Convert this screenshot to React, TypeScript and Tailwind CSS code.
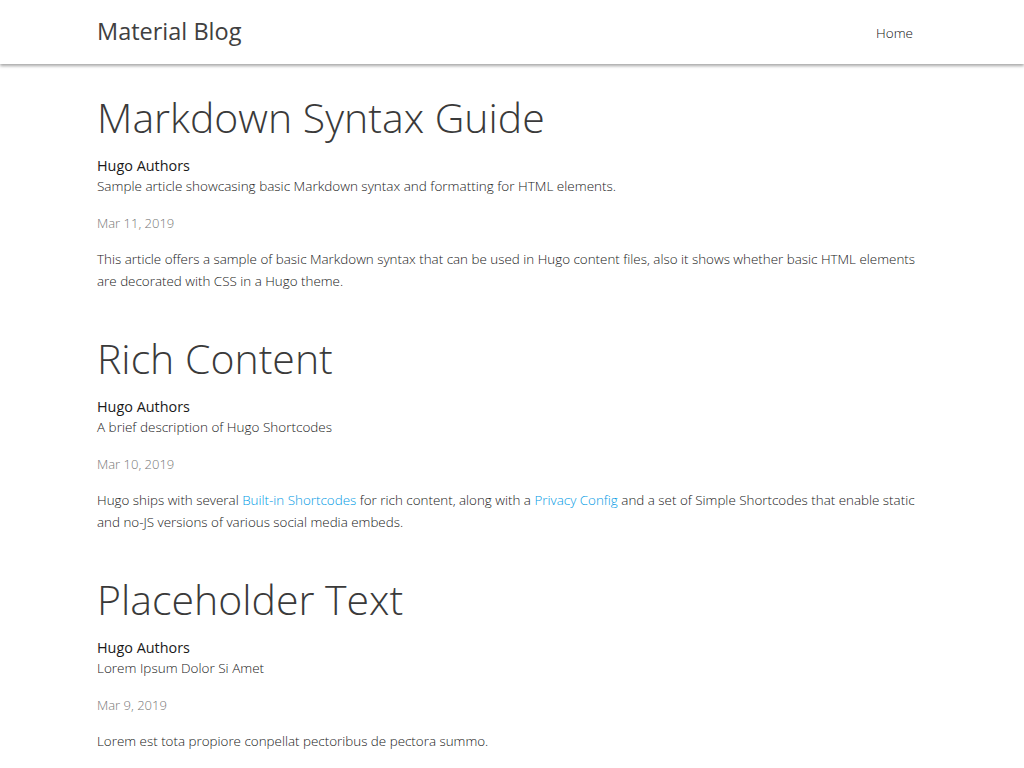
import React from 'react';

interface Post {
  title: string;
  description: string;
  date: string;
  summary: React.ReactNode;
}

const posts: Post[] = [
  {
    title: 'Markdown Syntax Guide',
    description: 'Sample article showcasing basic Markdown syntax and formatting for HTML elements.',
    date: 'Mar 11, 2019',
    summary:
      'This article offers a sample of basic Markdown syntax that can be used in Hugo content files, also it shows whether basic HTML elements are decorated with CSS in a Hugo theme.',
  },
  {
    title: 'Rich Content',
    description: 'A brief description of Hugo Shortcodes',
    date: 'Mar 10, 2019',
    summary: (
      <>
        Hugo ships with several{' '}
        <a href="#" className="text-[#039be5]">Built-in Shortcodes</a> for rich content, along with a{' '}
        <a href="#" className="text-[#039be5]">Privacy Config</a> and a set of Simple Shortcodes that enable static
        and no-JS versions of various social media embeds.
      </>
    ),
  },
  {
    title: 'Placeholder Text',
    description: 'Lorem Ipsum Dolor Si Amet',
    date: 'Mar 9, 2019',
    summary: 'Lorem est tota propiore conpellat pectoribus de pectora summo.',
  },
];

const PostSummary: React.FC<{ post: Post }> = ({ post }) => (
  <article className="mb-[40px]">
    <h1 className="text-[41px] leading-[53px] font-light text-[#3a3a3a]">{post.title}</h1>
    <div className="mt-[11px] text-[14.4px] leading-[21px] font-normal text-[#1a1a1a]">Hugo Authors</div>
    <div className="text-[13.5px] leading-[21px] font-light text-[#222]">{post.description}</div>
    <p className="mt-[15px] text-[13px] leading-[22px] font-light text-[#777]">{post.date}</p>
    <p className="mt-[14px] text-[13.4px] leading-[22px] font-light text-[#222]">{post.summary}</p>
  </article>
);

export default function App() {
  return (
    <div className="min-h-screen bg-white font-['Open_Sans',sans-serif]">
      <header className="h-[64px] bg-white shadow-[0_2px_3px_rgba(0,0,0,0.35)]">
        <div className="mx-auto flex h-full w-[830px] items-center justify-between">
          <a href="#" className="text-[23.5px] font-normal text-[#404040]">Material Blog</a>
          <nav className="pr-[14px]">
            <a href="#" className="text-[13.5px] font-light text-[#111]">Home</a>
          </nav>
        </div>
      </header>
      <main className="mx-auto w-[830px] pt-[27px]">
        {posts.map((post) => (
          <PostSummary key={post.title} post={post} />
        ))}
      </main>
    </div>
  );
}
